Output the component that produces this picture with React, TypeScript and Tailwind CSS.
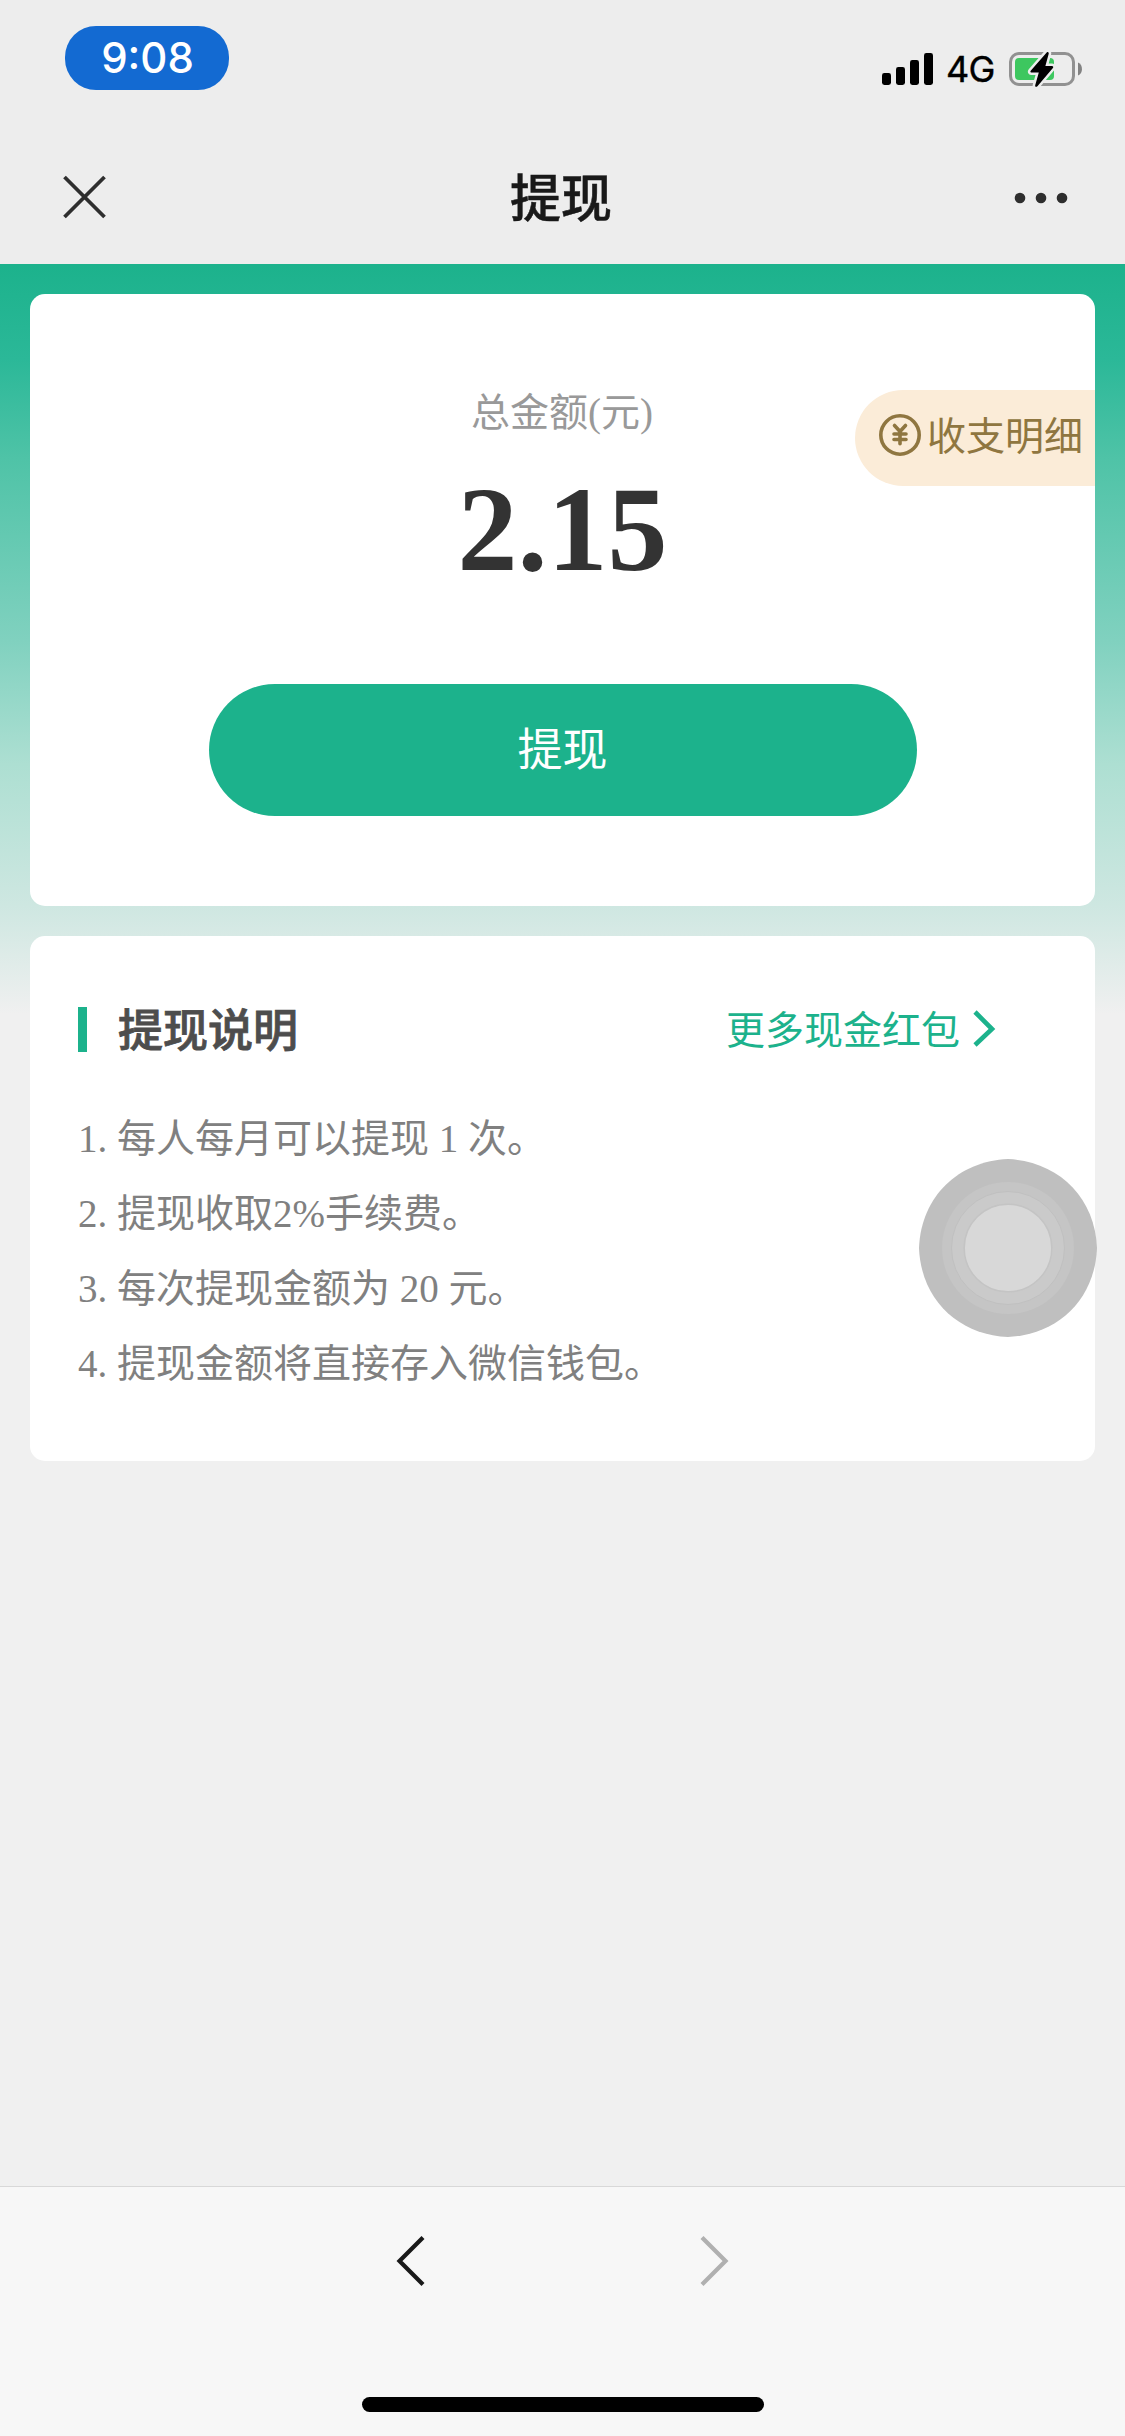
const SERIF = "font-['Liberation_Serif','Noto_Sans_CJK_SC',serif]";

const RULES = [
  '1. 每人每月可以提现 1 次。',
  '2. 提现收取2%手续费。',
  '3. 每次提现金额为 20 元。',
  '4. 提现金额将直接存入微信钱包。',
];

function StatusBar() {
  return (
    <div className="flex h-[132px] items-start justify-between pl-[65px] pr-[42px]">
      <div className="mt-[26px] flex h-16 w-[164px] items-center justify-center rounded-[31px] bg-[#136ad2] pl-px font-['Inter',sans-serif] text-[42px] font-medium leading-none text-white">
        9:08
      </div>
      <div className="mt-[44px] flex h-[50px] items-center">
        <svg width="52" height="34" viewBox="0 0 52 34" className="mr-[12px]">
          <rect x="0" y="21" width="9" height="12" rx="2.4" />
          <rect x="14" y="15" width="9" height="18" rx="2.4" />
          <rect x="28" y="8" width="9" height="25" rx="2.4" />
          <rect x="42" y="1" width="9" height="32" rx="2.4" />
        </svg>
        <span className="mr-[12px] w-[50px] whitespace-nowrap font-['Inter',sans-serif] text-[36px] leading-none tracking-[-0.8px] text-black [-webkit-text-stroke:0.4px_#000]">
          4G
        </span>
        <svg width="75" height="40" viewBox="0 0 75 40">
          <rect x="2.5" y="4.5" width="63" height="31" rx="8.5" fill="none" stroke="#919191" strokeWidth="3" />
          <path d="M70 13.5c5.3 2 5.3 11 0 13z" fill="#828282" />
          <rect x="7" y="9" width="39" height="22" rx="4" fill="#3dc75f" />
          <path d="M38.7 3.4 22.7 21.8c-.8 1 0 1.8.9 1.8h7.2l-3.6 12.6c-.4 1.7 1.2 2.2 2.2 1L44.9 19c.9-1 .2-2-.9-2h-6.600l3.300-12.300c.3-1.500-1-2.300-2-1.300z" stroke="#ededed" strokeWidth="5" />
          <path d="M38.7 3.400 22.700 21.800c-.8 1 0 1.800.9 1.800h7.200l-3.600 12.600c-.4 1.700 1.200 2.200 2.200 1L44.900 19c.9-1 .2-2-.9-2h-6.600l3.300-12.300c.3-1.500-1-2.300-2-1.300z" />
        </svg>
      </div>
    </div>
  );
}

function NavBar() {
  return (
    <div className="flex h-[132px] items-center justify-between pl-[61px] pr-[57px]">
      <svg width="48" height="48" viewBox="0 0 48 48" stroke="#2e2e2e" strokeWidth="3.8" className="-mt-[2px]">
        <path d="M3.500 4 43.500 44M43.500 4 3.500 44" />
      </svg>
      <h1 className="-mt-[5px] mr-px font-['Noto_Sans_CJK_SC',sans-serif] text-[51px] font-medium leading-none text-[#191919] [-webkit-text-stroke:0.5px_#191919]">提现</h1>
      <svg width="54" height="12" viewBox="0 0 54 12" fill="#2e2e2e">
        <circle cx="6" cy="6" r="5.300" />
        <circle cx="27" cy="6" r="5.300" />
        <circle cx="48" cy="6" r="5.300" />
      </svg>
    </div>
  );
}

function BalanceCard() {
  return (
    <section className="relative flex h-[612px] flex-col items-center rounded-[15px] bg-white">
      <p className="mt-[92px] pr-px text-[39px] leading-[54px] text-[#999]">总金额(元)</p>
      <p className="mt-[21px] text-[120px] font-bold leading-[138px] text-[#333]">2.15</p>
      <button className="mt-[85px] h-[132px] w-[708px] rounded-full bg-[#1cb28c] pt-[3px] text-[45px] leading-none text-white">提现</button>
      <a className="absolute right-0 top-24 flex h-24 w-60 items-center rounded-l-full bg-[#fbecd8] pl-6 text-[39px] leading-none text-[#8f7640]">
        <svg width="42" height="42" viewBox="0 0 42 42" fill="none" stroke="currentColor" className="-mt-[6px] mr-[6px] shrink-0">
          <circle cx="21" cy="21" r="19.200" strokeWidth="3.600" />
          <path d="m15.500 11.500 5.500 6 5.500-6M15 20h12M15 25.500h12M21 18v11.800" strokeWidth="3.600" strokeLinecap="round" strokeLinejoin="round" />
        </svg>
        <span className="-mt-[3px] whitespace-nowrap">收支明细</span>
      </a>
    </section>
  );
}

function RulesCard() {
  return (
    <section className="mt-[30px] h-[525px] rounded-[15px] bg-white pl-12 pt-[60px]">
      <div className="flex h-[66px] items-center justify-between pr-[99px]">
        <h2 className="flex items-center text-[45px] font-medium leading-none text-[#4d4d4d]">
          <span className="mr-[31px] h-[45px] w-[9px] bg-[#1cb28c]" />
          <span className="pt-[6px] [-webkit-text-stroke:0.8px_#4d4d4d]">提现说明</span>
        </h2>
        <a className="flex items-center text-[39px] leading-none text-[#1cb28c]">
          <span className="pt-[2px]">更多现金红包</span>
          <svg width="24" height="40" viewBox="0 0 24 40" fill="none" stroke="currentColor" strokeWidth="4.600" className="ml-[12px]">
            <path d="m3 3 17 17L3 36" />
          </svg>
        </a>
      </div>
      <ol className="mt-[39px] text-[39px] leading-[75px] text-[#808080]">
        {RULES.map((rule) => (
          <li key={rule}>{rule}</li>
        ))}
      </ol>
    </section>
  );
}

function AssistiveTouch() {
  return (
    <svg width="178" height="178" viewBox="-89 -89 178 178" className="absolute left-[919px] top-[1159px]">
      <path d="M0-89C49-87 87-52 89 0 87 52 49 87 0 89-49 87-87 52-89 0-87-52-49-87 0-89z" fill="#bfbfbf" />
      <circle r="66" fill="#c5c5c5" />
      <circle r="56.500" fill="#cacaca" stroke="#c0c0c0" />
      <circle r="43.800" fill="#d8d8d8" stroke="#c4c4c4" strokeWidth="1.500" />
    </svg>
  );
}

function BottomBar() {
  return (
    <footer className="flex h-[250px] flex-col items-center justify-between border-t border-[#d8d8d8] bg-[#f7f7f7] pb-6 pt-[46px]">
      <div className="flex w-[333px] justify-between">
        <svg width="30" height="56" viewBox="0 0 30 56" fill="none" stroke="#191919" strokeWidth="4.200">
          <path d="M27 4.500 3.500 28 27 51.500" />
        </svg>
        <svg width="30" height="56" viewBox="0 0 30 56" fill="none" stroke="#b0b0b0" strokeWidth="4.200">
          <path d="M3 4.500 26.500 28 3 51.500" />
        </svg>
      </div>
      <div className="h-[15px] w-[402px] rounded-full bg-black" />
    </footer>
  );
}

export default function App() {
  return (
    <div className={`relative flex h-[2436px] w-[1125px] flex-col overflow-hidden bg-[#f0f0f0] ${SERIF}`}>
      <header className="bg-[#ededed]">
        <StatusBar />
        <NavBar />
      </header>
      <main className="flex-1 bg-[linear-gradient(to_bottom,#1cb28c_0px,#2bb898_95px,#4fc3a7_195px,#80d1bf_376px,#addfd2_500px,#cee7e1_642px,#f0f0f0_750px)] px-[30px] pt-[30px]">
        <BalanceCard />
        <RulesCard />
      </main>
      <BottomBar />
      <AssistiveTouch />
    </div>
  );
}
